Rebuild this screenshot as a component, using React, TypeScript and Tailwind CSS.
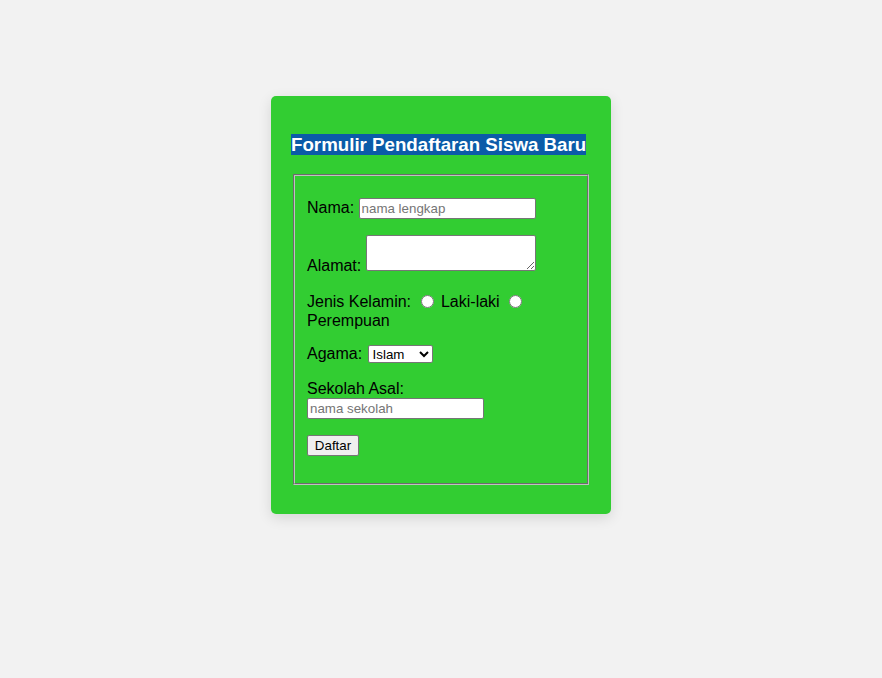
import React from 'react';

const inputBox =
  'bg-white border border-[#767676] rounded-[2px] px-[2px] text-[13.33px] leading-[15px] text-black placeholder:text-[#757575] align-baseline';

export default function App() {
  return (
    <div className="min-h-[678px] bg-[#f2f2f2] pt-[96px] font-['Liberation_Sans',Arial,sans-serif] text-black text-base">
      {/* Card */}
      <div className="mx-auto w-[340px] rounded-[5px] bg-[#32cd32] px-5 pt-5 pb-[29px] shadow-[0_4px_14px_rgba(0,0,0,0.12)]">
        <h3 className="mt-[18px] mb-[18px] text-[18.72px] font-bold leading-[22px]">
          <span className="bg-[#0b5ba8] text-white">Formulir Pendaftaran Siswa Baru</span>
        </h3>

        <form>
          <fieldset className="mx-[2px] border-2 [border-style:groove] border-[#c0c0c0] px-3 pt-[5.6px] pb-[11px]">
            {/* Nama */}
            <p className="my-4 leading-[18px]">
              Nama:{' '}
              <input
                type="text"
                placeholder="nama lengkap"
                className={`${inputBox} w-[177px] h-[21px]`}
              />
            </p>

            {/* Alamat */}
            <p className="my-4 leading-[18px]">
              Alamat:{' '}
              <textarea className="bg-white border border-[#767676] rounded-[2px] w-[170px] h-[36px] align-baseline text-[13.33px]" />
            </p>

            {/* Jenis Kelamin */}
            <p className="mt-[17px] mb-[15px] leading-[19px]">
              Jenis Kelamin:{' '}
              <input type="radio" name="jk" className="mt-[3px] mr-[3px] ml-[5px] w-[13px] h-[13px] align-[-1px]" /> Laki-laki{' '}
              <input type="radio" name="jk" className="mt-[3px] mr-[3px] ml-[5px] w-[13px] h-[13px] align-[-1px]" /> Perempuan
            </p>

            {/* Agama */}
            <p className="mt-[15px] mb-4 leading-[18px]">
              Agama:{' '}
              <select className="ml-[1px] bg-white border border-[#767676] rounded-[2px] w-[65px] h-[18px] text-[13.33px] leading-[15px] align-baseline">
                <option>Islam</option>
                <option>Kristen</option>
                <option>Katolik</option>
                <option>Hindu</option>
                <option>Buddha</option>
              </select>
            </p>

            {/* Sekolah Asal */}
            <p className="mt-[17px] mb-4 leading-[18px]">
              Sekolah Asal:
              <br />
              <input
                type="text"
                placeholder="nama sekolah"
                className={`${inputBox} w-[177px] h-[21px]`}
              />
            </p>

            <p className="my-4 leading-[18px]">
              <button
                type="button"
                className="bg-[#efefef] border border-[#767676] rounded-[2px] w-[52px] h-[21px] text-[13.33px] leading-[15px] text-black"
              >
                Daftar
              </button>
            </p>
          </fieldset>
        </form>
      </div>
    </div>
  );
}
